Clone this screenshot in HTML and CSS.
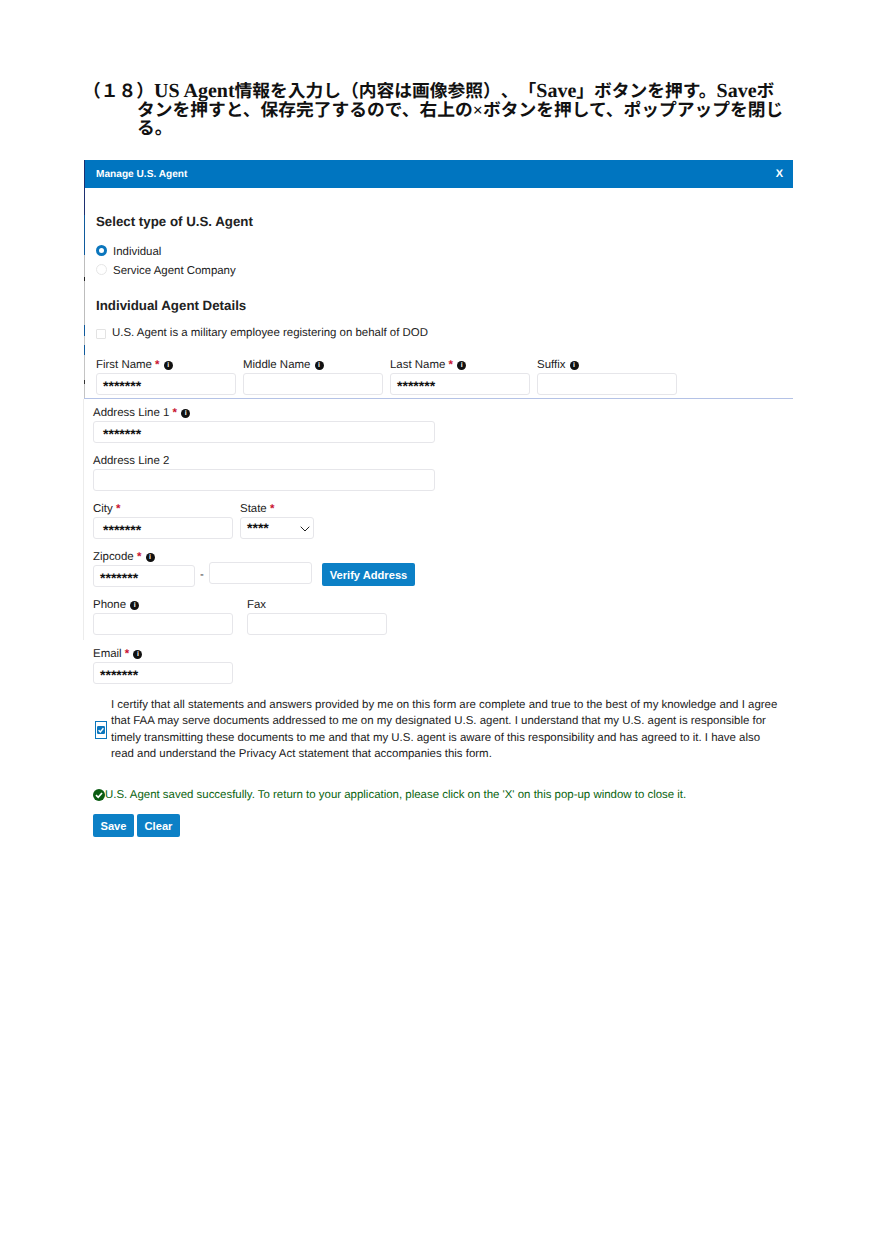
FILE: index.html
```html
<!DOCTYPE html>
<html lang="ja">
<head>
<meta charset="utf-8">
<title>Manage U.S. Agent</title>
<link rel="stylesheet" href="styles.css">
</head>
<body>
<h1 class="step"><span class="num">（１８）</span><span class="lat">US Agent</span>情報を入力し（内容は画像参照）、「<span class="lat">Save</span>」ボタンを押す。<span class="lat">Save</span>ボ<br>タンを押すと、保存完了するので、右上の×ボタンを押して、ポップアップを閉じ<br>る。</h1>

<section class="panel">
  <header class="bar"><span>Manage U.S. Agent</span><span class="close">X</span></header>
  <div class="panel-body">
    <h2 class="heading first">Select type of U.S. Agent</h2>
    <div class="radio-row"><span class="radio on"></span><span class="radio-text">Individual</span></div>
    <div class="radio-row"><span class="radio"></span><span class="radio-text">Service Agent Company</span></div>
    <h2 class="heading second">Individual Agent Details</h2>
    <div class="check-row"><span class="box"></span>U.S. Agent is a military employee registering on behalf of DOD</div>
    <div class="name-row">
      <div class="field w140"><label class="lab">First Name <b class="req">*</b> <i class="info">i</i></label><div class="input">*******</div></div>
      <div class="field w140"><label class="lab">Middle Name <i class="info">i</i></label><div class="input"></div></div>
      <div class="field w140"><label class="lab">Last Name <b class="req">*</b> <i class="info">i</i></label><div class="input">*******</div></div>
      <div class="field w140"><label class="lab">Suffix <i class="info">i</i></label><div class="input"></div></div>
    </div>
  </div>
</section>

<section class="lower">
  <div class="lined">
    <div class="field w342 r1"><label class="lab">Address Line 1 <b class="req">*</b> <i class="info">i</i></label><div class="input pad10">*******</div></div>
    <div class="field w342 r2"><label class="lab">Address Line 2</label><div class="input"></div></div>
    <div class="row r3">
      <div class="field w140"><label class="lab">City <b class="req">*</b></label><div class="input pad8">*******</div></div>
      <div class="field w74"><label class="lab">State <b class="req">*</b></label>
        <div class="input select">****
          <svg class="chev" viewBox="0 0 10 6" width="10" height="6"><path d="M.7.7 5 5l4.3-4.3" fill="none" stroke="#222" stroke-width="1"/></svg>
        </div>
      </div>
    </div>
    <div class="zip r4">
      <div class="field w102"><label class="lab">Zipcode <b class="req">*</b> <i class="info">i</i></label><div class="input">*******</div></div>
      <span class="dash">-</span>
      <div class="input zip2"></div>
      <button class="btn verify">Verify Address</button>
    </div>
    <div class="row wide r5">
      <div class="field w140"><label class="lab">Phone <i class="info">i</i></label><div class="input"></div></div>
      <div class="field w140"><label class="lab">Fax</label><div class="input"></div></div>
    </div>
  </div>
  <div class="inner">
    <div class="field w140 r6"><label class="lab">Email <b class="req">*</b> <i class="info">i</i></label><div class="input">*******</div></div>
    <div class="certify">
      <span class="cbox"><svg viewBox="0 0 10 10" width="8" height="8"><rect width="10" height="10" rx="1.5" fill="#0b76bd"/><path d="M2 5.2 4.2 7.4 8 2.9" fill="none" stroke="#fff" stroke-width="1.8"/></svg></span>
      <p class="cert-text">I certify that all statements and answers provided by me on this form are complete and true to the best of my knowledge and I agree<br>that FAA may serve documents addressed to me on my designated U.S. agent. I understand that my U.S. agent is responsible for<br>timely transmitting these documents to me and that my U.S. agent is aware of this responsibility and has agreed to it. I have also<br>read and understand the Privacy Act statement that accompanies this form.</p>
    </div>
    <p class="success"><svg viewBox="0 0 12 12" width="12" height="12"><circle cx="6" cy="6" r="6" fill="#0a5c12"/><path d="M3 6.2 5.2 8.3 9 4" fill="none" stroke="#fff" stroke-width="1.7"/></svg><span>U.S. Agent saved succesfully. To return to your application, please click on the 'X' on this pop-up window to close it.</span></p>
    <div class="actions"><button class="btn save">Save</button><button class="btn clear">Clear</button></div>
  </div>
</section>
</body>
</html>
```
FILE: styles.css
```css
* { box-sizing: border-box; }
html, body { margin: 0; padding: 0; background: #fff; }
body { height: 1236px; overflow: hidden; font-family: "Liberation Sans", Arial, sans-serif; font-size: 11.45px; color: #222; text-rendering: geometricPrecision; }

.step {
  margin: 0;
  padding: 82px 0 0 137px;
  font-family: "Liberation Serif", "Noto Sans CJK JP", serif;
  font-size: 17.75px;
  line-height: 18.5px;
  font-weight: 700;
  color: #111;
  white-space: nowrap;
  height: 160px;
  text-spacing-trim: space-all;
}
.num { margin-left: -54px; }
.lat { font-size: 20px; }

.panel {
  margin-left: 84px;
  width: 709px;
  height: 239px;
  padding-left: 1px;
  border-bottom: 1px solid #b4c2e6;
  background: linear-gradient(to bottom,
    #1d2f70 0, #1d2f70 55px,
    #0f5a9c 55px, #0f5a9c 95px,
    #bdbdbd 95px, #bdbdbd 117px,
    #222 117px, #222 121px,
    #bdbdbd 121px, #bdbdbd 165px,
    #0f5a9c 165px, #0f5a9c 176px,
    #c4c4c4 176px, #c4c4c4 185px,
    #0f5a9c 185px, #0f5a9c 195px,
    #c4c4c4 195px, #c4c4c4 220px,
    #333 220px, #333 224px,
    #c4c4c4 224px) left top / 1px 100% no-repeat;
}
.bar { height: 28px; background: #0075c0; color: #fff; font-weight: 700; font-size: 10.15px; display: flex; align-items: center; justify-content: space-between; padding: 0 10px 0 11px; }
.close { font-size: 11px; }
.panel-body { padding-left: 11px; }

.heading { margin: 0; font-size: 13.3px; line-height: 16px; font-weight: 700; color: #222; }
.heading.first { padding-top: 26px; margin-bottom: 11px; }
.heading.second { padding-top: 19px; margin-bottom: 11px; }

.radio-row { display: flex; align-items: center; gap: 6px; height: 19px; }
.radio-text { padding-top: 2px; }
.radio { width: 11px; height: 11px; border-radius: 50%; border: 1px solid #e6e6e6; background: #fff; flex: none; }
.radio.on { border: 3.5px solid #0b76bd; background: #fff; }

.check-row { display: flex; align-items: center; gap: 6px; height: 15px; }
.box { width: 10px; height: 10px; border: 1px solid #e3e3e3; border-radius: 1px; margin-top: 2px; flex: none; }

.name-row { display: flex; gap: 7px; margin-top: 17px; }

.field { display: flex; flex-direction: column; }
.lab { display: block; height: 16px; line-height: 17px; white-space: nowrap; color: #222; }
.req { color: #c8102e; font-weight: 700; }
.info { display: inline-block; width: 9px; height: 9px; border-radius: 50%; background: #111; color: #fff; font: 700 7px/9px "Liberation Sans", sans-serif; text-align: center; vertical-align: 1px; margin-left: 1px; }

.input { height: 22px; border: 1px solid #e6e6ea; border-radius: 3px; background: #fff; padding: 4px 0 0 6px; font-size: 14px; line-height: 17px; font-weight: 700; color: #111; white-space: nowrap; }
.pad10 { padding-left: 9px; }
.pad8 { padding-left: 9px; }
.w140 { width: 140px; }
.w342 { width: 342px; }
.w102 { width: 102px; }
.w74 { width: 74px; }

.lower { padding-top: 0; }
.lined { margin-left: 83px; width: 400px; border-left: 1px solid #ececec; padding-left: 9px; height: 241px; }
.inner { padding-left: 93px; }

.r1 { padding-top: 6px; }
.r2 { margin-top: 10px; }
.r3 { margin-top: 10px; }
.r4 { margin-top: 10px; }
.r5 { margin-top: 10px; }
.r6 { margin-top: 6px; }

.row { display: flex; gap: 7px; }
.row.wide { gap: 14px; }

.select { position: relative; padding-left: 6px; padding-top: 2px; }
.chev { position: absolute; right: 3px; top: 8px; }

.zip { display: flex; align-items: flex-start; }
.dash { margin: 20px 0 0 5px; width: 9px; }
.zip2 { width: 103px; margin-top: 13px; margin-left: 0; }
.btn { border: 0; border-radius: 2px; background: #0c80c6; color: #fff; font: 700 11.15px "Liberation Sans", sans-serif; height: 23px; padding: 0; }
.verify { width: 93px; margin: 14px 0 0 10px; }

.certify { display: flex; align-items: center; margin-top: 13px; }
.cbox { width: 12px; height: 18px; border: 1px solid #0b76bd; margin: 0 4px 0 2px; display: flex; align-items: center; justify-content: center; flex: none; }
.cert-text { margin: 0; line-height: 16.3px; color: #222; white-space: nowrap; }

.success { margin: 25px 0 0; display: flex; align-items: center; color: #0a6410; line-height: 16px; white-space: nowrap; }
.actions { display: flex; gap: 3px; margin-top: 11px; }
.save { width: 41px; }
.clear { width: 43px; }
```
